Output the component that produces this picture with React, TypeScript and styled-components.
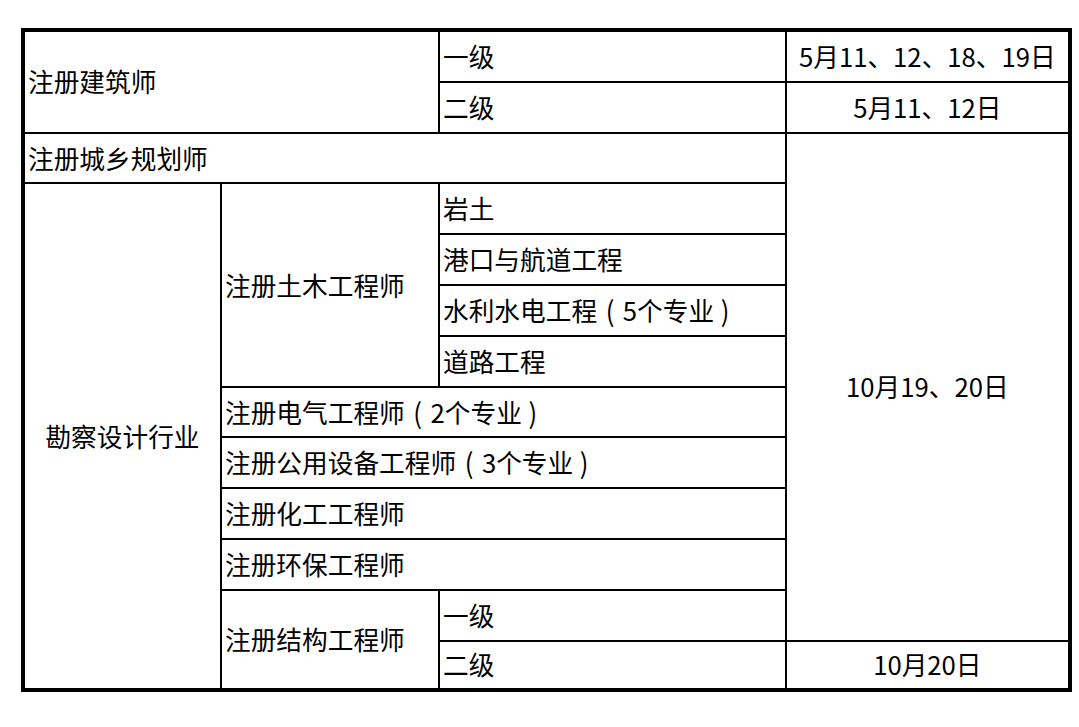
import React from 'react';
import styled, { createGlobalStyle } from 'styled-components';

const GlobalStyle = createGlobalStyle`
  html, body {
    margin: 0;
    padding: 0;
    background: #ffffff;
  }
  body {
    font-family: "Noto Sans CJK SC", "Noto Sans", sans-serif;
    color: #000000;
  }
`;

const Page = styled.div`
  padding: 28px 0 0 21px;
`;

const Grid = styled.div`
  display: grid;
  grid-template-columns: 195px 216px 345px 280.7px;
  grid-template-rows: repeat(12, 48.8px) 46px;
  gap: 2px;
  width: max-content;
  background: #000000;
  border: 4px solid #000000;
  border-bottom-width: 4.5px;
`;

type CellProps = {
  $col: string;
  $row: string;
  $align?: 'left' | 'center';
};

const Cell = styled.div<CellProps>`
  grid-column: ${(p) => p.$col};
  grid-row: ${(p) => p.$row};
  display: flex;
  align-items: center;
  justify-content: ${(p) => (p.$align === 'center' ? 'center' : 'flex-start')};
  padding: 0 3px;
  background: #ffffff;
  font-size: 25.7px;
  line-height: 1.2;
  white-space: nowrap;
  overflow: hidden;
`;

const Paren = styled.span<{ $close?: boolean }>`
  display: inline-block;
  width: ${(p) => (p.$close ? '0.85em' : '1em')};
  text-align: center;
  transform: scaleY(1.08);
`;

const renderText = (text: string) => {
  const parts = text.split(/([（）])/);
  return parts.map((part, i) => {
    if (part === '（') return <Paren key={i}>(</Paren>;
    if (part === '）') return <Paren key={i} $close>)</Paren>;
    return <React.Fragment key={i}>{part}</React.Fragment>;
  });
};

const cells: Array<{ text: string; col: string; row: string; align?: 'left' | 'center' }> = [
  { text: '注册建筑师', col: '1 / 3', row: '1 / 3' },
  { text: '一级', col: '3', row: '1' },
  { text: '5月11、12、18、19日', col: '4', row: '1', align: 'center' },
  { text: '二级', col: '3', row: '2' },
  { text: '5月11、12日', col: '4', row: '2', align: 'center' },
  { text: '注册城乡规划师', col: '1 / 4', row: '3' },
  { text: '10月19、20日', col: '4', row: '3 / 13', align: 'center' },
  { text: '勘察设计行业', col: '1', row: '4 / 14', align: 'center' },
  { text: '注册土木工程师', col: '2', row: '4 / 8' },
  { text: '岩土', col: '3', row: '4' },
  { text: '港口与航道工程', col: '3', row: '5' },
  { text: '水利水电工程（5个专业）', col: '3', row: '6' },
  { text: '道路工程', col: '3', row: '7' },
  { text: '注册电气工程师（2个专业）', col: '2 / 4', row: '8' },
  { text: '注册公用设备工程师（3个专业）', col: '2 / 4', row: '9' },
  { text: '注册化工工程师', col: '2 / 4', row: '10' },
  { text: '注册环保工程师', col: '2 / 4', row: '11' },
  { text: '注册结构工程师', col: '2', row: '12 / 14' },
  { text: '一级', col: '3', row: '12' },
  { text: '二级', col: '3', row: '13' },
  { text: '10月20日', col: '4', row: '13', align: 'center' },
];

const App: React.FC = () => {
  return (
    <>
      <GlobalStyle />
      <Page>
        <Grid>
          {cells.map((c, i) => (
            <Cell key={i} $col={c.col} $row={c.row} $align={c.align}>
              {renderText(c.text)}
            </Cell>
          ))}
        </Grid>
      </Page>
    </>
  );
};

export default App;
